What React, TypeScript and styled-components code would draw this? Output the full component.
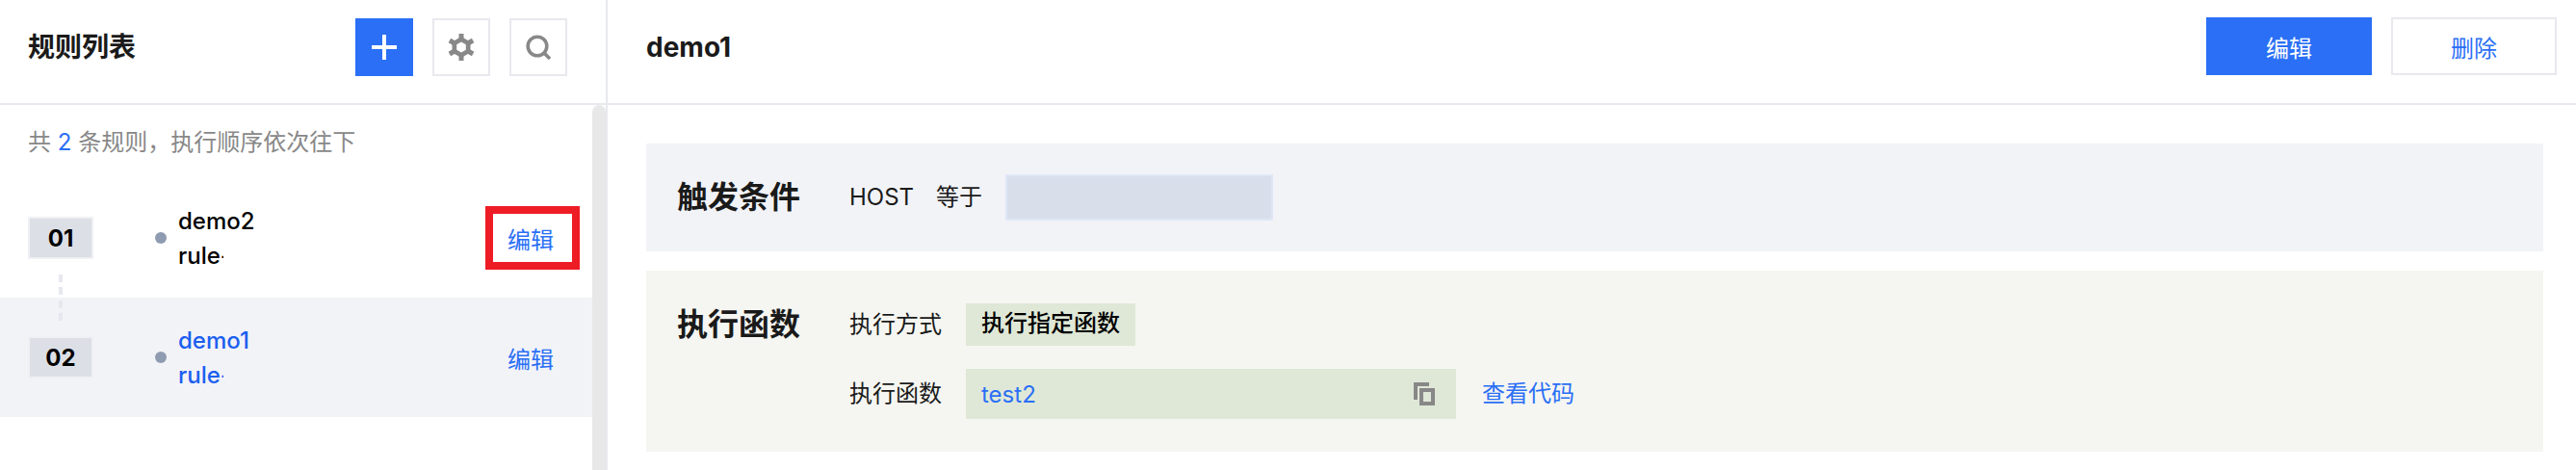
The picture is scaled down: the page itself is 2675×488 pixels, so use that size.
import React from 'react';
import styled, { createGlobalStyle } from 'styled-components';

const GlobalStyle = createGlobalStyle`
	html, body {
		margin: 0;
		padding: 0;
		background: #fff;
	}
	body {
		font-family: Inter, 'Noto Sans CJK SC', sans-serif;
		font-size: 24px;
		color: #1a1a1a;
	}
	* {
		box-sizing: border-box;
	}
`;

const Page = styled.div`
	display: flex;
	width: 2675px;
	height: 488px;
	overflow: hidden;
`;

const Sidebar = styled.aside`
	display: flex;
	flex-direction: column;
	flex: none;
	width: 631px;
	border-right: 2px solid #e8e9ef;
`;

const SidebarHeader = styled.header`
	display: flex;
	justify-content: space-between;
	flex: none;
	height: 109px;
	padding: 19px 40px 0 29px;
	border-bottom: 2px solid #e8e9ef;
`;

const SidebarTitle = styled.h2`
	margin: 0;
	font-size: 28px;
	font-weight: 700;
	line-height: 60px;
`;

const Tools = styled.div`
	display: flex;
	gap: 20px;
`;

const IconButton = styled.button<{ $primary?: boolean }>`
	display: flex;
	align-items: center;
	justify-content: center;
	width: 60px;
	height: 60px;
	padding: 0;
	border: 2px solid ${({ $primary }) => ($primary ? '#2a6ff6' : '#e8e9ef')};
	background: ${({ $primary }) => ($primary ? '#2a6ff6' : '#fff')};
	color: ${({ $primary }) => ($primary ? '#fff' : '#888')};
`;

const SidebarBody = styled.div`
	display: flex;
	flex: 1;
	min-height: 0;
`;

const RuleColumn = styled.div`
	flex: none;
	width: 615px;
`;

const Summary = styled.p`
	height: 76px;
	margin: 0;
	padding: 21px 0 0 29px;
	color: #888;
	font-size: 24px;
	line-height: 36px;

	b {
		color: #2a6ff6;
		font-weight: 400;
	}
`;

const RuleRow = styled.div<{ $active?: boolean }>`
	position: relative;
	display: flex;
	align-items: center;
	height: 124px;
	padding: 0 21px 0 29px;
	background: ${({ $active }) => ($active ? '#f2f3f7' : 'transparent')};
`;

const OrderBadge = styled.span`
	display: flex;
	align-items: center;
	justify-content: center;
	flex: none;
	width: 68px;
	height: 44px;
	border: 2px solid #eef0f4;
	background: #dcdfe6;
	color: #000;
	font-size: 24px;
	font-weight: 700;
`;

const Connector = styled.i`
	position: absolute;
	z-index: 1;
	left: 61px;
	top: 100px;
	width: 4px;
	height: 48px;
	background: repeating-linear-gradient(to bottom, #e7e8ef 0 8px, transparent 8px 13.3px);
`;

const StatusDot = styled.i`
	flex: none;
	width: 12px;
	height: 12px;
	margin-left: 64px;
	border-radius: 50%;
	background: #8f9bb0;
`;

const RuleName = styled.div<{ $active?: boolean }>`
	margin: 2px 0 0 12px;
	color: ${({ $active }) => ($active ? '#1c5ff0' : '#000')};
	font-size: 24px;
	font-weight: 500;
	line-height: 36px;
`;

const ClippedLine = styled.span`
	display: block;
	width: 47px;
	overflow: hidden;
	white-space: nowrap;
`;

const EditLink = styled.a<{ $marked?: boolean }>`
	display: flex;
	align-items: center;
	width: 82px;
	height: 50px;
	margin-left: auto;
	padding-left: 15px;
	color: #2a6ff6;
	font-size: 24px;
	outline: ${({ $marked }) => ($marked ? '8px solid #ee1c25' : 'none')};
`;

const ScrollTrack = styled.div`
	flex: none;
	width: 14px;
	border-radius: 7px 7px 0 0;
	background: #e8e8e8;
`;

const Detail = styled.main`
	flex: 1;
	min-width: 0;
`;

const DetailHeader = styled.header`
	display: flex;
	align-items: flex-start;
	justify-content: space-between;
	height: 109px;
	padding: 18px 20px 0 40px;
	border-bottom: 2px solid #e8e9ef;
`;

const DetailTitle = styled.h1`
	margin: 0;
	font-size: 28px;
	font-weight: 700;
	line-height: 62px;
`;

const HeaderActions = styled.div`
	display: flex;
	gap: 20px;
`;

const ActionButton = styled.button<{ $primary?: boolean }>`
	width: 172px;
	height: 60px;
	padding: 0;
	border: 2px solid ${({ $primary }) => ($primary ? '#2a6ff6' : '#e8e9ef')};
	background: ${({ $primary }) => ($primary ? '#2a6ff6' : '#fff')};
	color: ${({ $primary }) => ($primary ? '#fff' : '#2a6ff6')};
	font-family: inherit;
	font-size: 24px;
`;

const Sections = styled.div`
	display: flex;
	flex-direction: column;
	gap: 20px;
	padding: 40px 34px 0 40px;
`;

const Section = styled.section<{ $tone: 'grey' | 'green' }>`
	display: flex;
	align-items: ${({ $tone }) => ($tone === 'grey' ? 'center' : 'flex-start')};
	padding: ${({ $tone }) => ($tone === 'grey' ? '32px' : '34px')} 32px;
	background: ${({ $tone }) => ($tone === 'grey' ? '#f2f3f7' : '#f5f6f1')};
`;

const SectionTitle = styled.h3`
	flex: none;
	width: 179px;
	margin: 0;
	font-size: 32px;
	font-weight: 700;
	line-height: 44px;
`;

const FieldList = styled.div`
	display: flex;
	flex-direction: column;
	gap: 24px;
`;

const Field = styled.div`
	display: flex;
	align-items: center;
`;

const FieldLabel = styled.span`
	flex: none;
	width: 121px;
	line-height: 36px;
`;

const ConditionKey = styled.span`
	margin-right: 23px;
	line-height: 36px;
`;

const ConditionOp = styled.span`
	margin-right: 24px;
	line-height: 36px;
`;

const ConditionValue = styled.div`
	width: 278px;
	height: 48px;
	border: 2px solid #dfe7f7;
	background: #d8dfeb;
`;

const ModeTag = styled.span`
	height: 44px;
	padding: 0 16px;
	background: #dfe8d7;
	color: #000;
	font-weight: 500;
	line-height: 42px;
`;

const FunctionBox = styled.div`
	display: flex;
	align-items: center;
	justify-content: space-between;
	width: 509px;
	height: 52px;
	padding: 0 22px 0 16px;
	background: #dfe8d7;
	color: #2a6ff6;
`;

const CodeLink = styled.a`
	margin-left: 27px;
	color: #2a6ff6;
	line-height: 36px;
`;

const PlusIcon = () => (
	<svg width="28" height="28" viewBox="0 0 28 28" fill="currentColor">
		<rect x="1" y="12" width="26" height="4" />
		<rect x="12" y="1" width="4" height="26" />
	</svg>
);

const GearIcon = () => (
	<svg width="28" height="28" viewBox="0 0 28 28" fill="currentColor">
		<path
			fillRule="evenodd"
			d="M14 3 23.5 8.5V19.5L14 25 4.5 19.5V8.5ZM14 8.5 9.2 11.2V16.8L14 19.5 18.8 16.8V11.2Z"
		/>
		{[0, 60, 120, 180, 240, 300].map((angle) => (
			<rect key={angle} x="11.5" y="0" width="5" height="5" transform={`rotate(${angle} 14 14)`} />
		))}
	</svg>
);

const SearchIcon = () => (
	<svg width="28" height="28" viewBox="0 0 28 28" fill="none" stroke="currentColor" strokeWidth="3.6">
		<circle cx="13" cy="13" r="9.8" />
		<path d="M19.5 19.5 26 26" />
	</svg>
);

const CopyIcon = () => (
	<svg width="22" height="24" viewBox="0 0 22 24" fill="#888">
		<path d="M0 0H16V4H4V18H0Z" />
		<path fillRule="evenodd" d="M6 6H22V24H6ZM10 10V20H18V10Z" />
	</svg>
);

const rules = [
	{ order: '01', name: 'demo2', marked: true, active: false },
	{ order: '02', name: 'demo1', marked: false, active: true },
];

export default function App() {
	return (
		<Page>
			<GlobalStyle />
			<Sidebar>
				<SidebarHeader>
					<SidebarTitle>规则列表</SidebarTitle>
					<Tools>
						<IconButton $primary>
							<PlusIcon />
						</IconButton>
						<IconButton>
							<GearIcon />
						</IconButton>
						<IconButton>
							<SearchIcon />
						</IconButton>
					</Tools>
				</SidebarHeader>
				<SidebarBody>
					<RuleColumn>
						<Summary>
							共 <b>2</b> 条规则，执行顺序依次往下
						</Summary>
						{rules.map((rule, index) => (
							<RuleRow key={rule.order} $active={rule.active}>
								<OrderBadge>{rule.order}</OrderBadge>
								{index === 0 && <Connector />}
								<StatusDot />
								<RuleName $active={rule.active}>
									{rule.name}
									<ClippedLine>rule-</ClippedLine>
								</RuleName>
								<EditLink $marked={rule.marked}>编辑</EditLink>
							</RuleRow>
						))}
					</RuleColumn>
					<ScrollTrack />
				</SidebarBody>
			</Sidebar>
			<Detail>
				<DetailHeader>
					<DetailTitle>demo1</DetailTitle>
					<HeaderActions>
						<ActionButton $primary>编辑</ActionButton>
						<ActionButton>删除</ActionButton>
					</HeaderActions>
				</DetailHeader>
				<Sections>
					<Section $tone="grey">
						<SectionTitle>触发条件</SectionTitle>
						<ConditionKey>HOST</ConditionKey>
						<ConditionOp>等于</ConditionOp>
						<ConditionValue />
					</Section>
					<Section $tone="green">
						<SectionTitle>执行函数</SectionTitle>
						<FieldList>
							<Field>
								<FieldLabel>执行方式</FieldLabel>
								<ModeTag>执行指定函数</ModeTag>
							</Field>
							<Field>
								<FieldLabel>执行函数</FieldLabel>
								<FunctionBox>
									test2
									<CopyIcon />
								</FunctionBox>
								<CodeLink>查看代码</CodeLink>
							</Field>
						</FieldList>
					</Section>
				</Sections>
			</Detail>
		</Page>
	);
}
